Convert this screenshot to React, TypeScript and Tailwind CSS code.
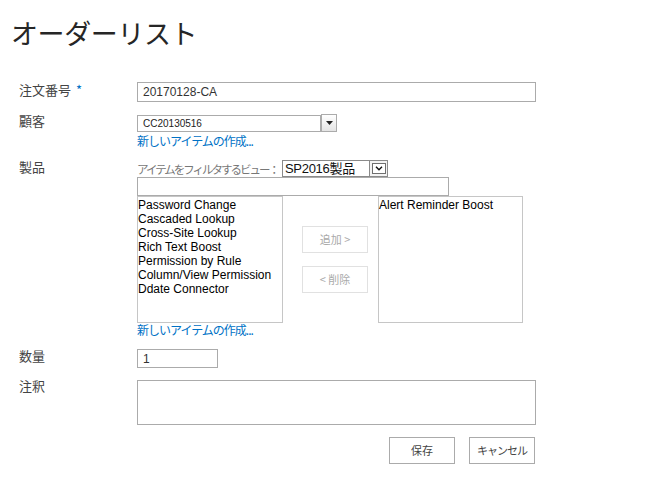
import React from "react";

const jp = { fontFamily: '"Noto Sans CJK JP", "Noto Sans", sans-serif' };
const lat = { fontFamily: '"Liberation Sans", "Noto Sans CJK JP", sans-serif' };

function Label({ children, className = "" }: { children: React.ReactNode; className?: string }) {
  return (
    <div className={"w-[118px] shrink-0 text-[13px] leading-[16px] text-[#444] " + className} style={jp}>
      {children}
    </div>
  );
}

function NewItemLink() {
  return (
    <div className="text-[12px] leading-[14px] tracking-[-1px] text-[#0072c6]" style={jp}>
      新しいアイテムの作成...
    </div>
  );
}

export default function App() {
  const left = [
    "Password Change",
    "Cascaded Lookup",
    "Cross-Site Lookup",
    "Rich Text Boost",
    "Permission by Rule",
    "Column/View Permission",
    "Ddate Connector",
  ];
  return (
    <div className="w-[647px] h-[483px] bg-white overflow-hidden relative">
      <div className="pl-[11px] pt-[19px]">
        <div className="text-[27px] leading-[27px] tracking-[-0.4px] text-[#262626]" style={jp}>
          オーダーリスト
        </div>
      </div>

      <div className="pl-[19px]">
        {/* 注文番号 */}
        <div className="flex mt-[36px]">
          <Label>
            注文番号 <span className="text-[#0072c6] ml-[2px]">*</span>
          </Label>
          <div className="w-[399px] h-[20px] border border-[#ababab] flex items-center pl-[5px] text-[12px] text-[#333]" style={lat}>
            20170128-CA
          </div>
        </div>

        {/* 顧客 */}
        <div className="flex mt-[11px]">
          <Label>顧客</Label>
          <div className="flex flex-col">
            <div className="flex mt-[1px]">
              <div className="w-[184px] h-[17px] mt-[1px] border border-[#ababab] flex items-center pl-[5px] text-[10px] text-[#222]" style={lat}>
                CC20130516
              </div>
              <div className="w-[16px] h-[18px] border border-[#ababab] bg-gradient-to-b from-white to-[#e4e4e4] flex items-center justify-center">
                <svg width="7" height="4" viewBox="0 0 7 4">
                  <path d="M0 0 H7 L3.5 4 Z" fill="#222" />
                </svg>
              </div>
            </div>
            <div className="mt-[2px]">
              <NewItemLink />
            </div>
          </div>
        </div>

        {/* 製品 */}
        <div className="flex mt-[11px]">
          <Label>製品</Label>
          <div className="flex flex-col mt-[1px]">
            <div className="flex items-center h-[17px]">
              <div className="w-[145px] overflow-hidden text-[11.5px] leading-[14px] tracking-[-2px] text-[#777] whitespace-nowrap" style={jp}>
                アイテムをフィルタするビュー：
              </div>
              <div className="w-[106px] h-[17px] border border-[#8a8a8a] flex items-center">
                <div className="flex-1 pl-[2px] text-[13px] leading-[15px] text-[#111] whitespace-nowrap tracking-[-0.3px]" style={lat}>
                  SP2016製品
                </div>
                <div className="w-[18px] h-[15px] border-l border-[#8a8a8a] flex items-center justify-center bg-[#f3f3f3]">
                  <div className="w-[14px] h-[11px] border border-[#6f6f6f] bg-white flex items-center justify-center">
                    <svg width="8" height="5" viewBox="0 0 8 5">
                      <path d="M1 0.8 L4 3.8 L7 0.8" stroke="#111" strokeWidth="1.4" fill="none" />
                    </svg>
                  </div>
                </div>
              </div>
            </div>
            <div className="w-[312px] h-[19px] border border-[#ababab]" />
            <div className="flex">
              <div className="w-[146px] h-[127px] border border-[#c6c6c6] text-[12px] leading-[14px] text-black pt-[1px]" style={lat}>
                {left.map((t) => (
                  <div key={t} className="whitespace-nowrap">{t}</div>
                ))}
              </div>
              <div className="flex flex-col ml-[19px] mr-[10px] pt-[30px] gap-[13px]">
                <div className="w-[66px] h-[27px] border border-[#e1e1e1] flex items-center justify-center text-[11px] text-[#aaa]" style={jp}>
                  追加 &gt;
                </div>
                <div className="w-[66px] h-[27px] border border-[#e1e1e1] flex items-center justify-center text-[11px] text-[#aaa]" style={jp}>
                  &lt; 削除
                </div>
              </div>
              <div className="w-[145px] h-[127px] border border-[#c6c6c6] text-[12px] leading-[14px] text-black pt-[1px]" style={lat}>
                <div className="whitespace-nowrap">Alert Reminder Boost</div>
              </div>
            </div>
            <NewItemLink />
          </div>
        </div>

        {/* 数量 */}
        <div className="flex mt-[11px]">
          <Label>数量</Label>
          <div className="w-[81px] h-[19px] mt-[1px] border border-[#ababab] flex items-center pl-[5px] text-[12px] text-[#333]" style={lat}>
            1
          </div>
        </div>

        {/* 注釈 */}
        <div className="flex mt-[10px]">
          <Label>注釈</Label>
          <div className="w-[399px] h-[45px] mt-[2px] border border-[#ababab]" />
        </div>

        {/* buttons */}
        <div className="w-[516px] flex justify-end gap-[14px] mt-[12px]">
          <div className="w-[66px] h-[27px] border border-[#ababab] flex items-center justify-center text-[11px] text-[#444]" style={jp}>
            保存
          </div>
          <div className="w-[66px] h-[27px] border border-[#ababab] flex items-center justify-center text-[11px] tracking-[-1px] text-[#444]" style={jp}>
            キャンセル
          </div>
        </div>
      </div>
    </div>
  );
}
